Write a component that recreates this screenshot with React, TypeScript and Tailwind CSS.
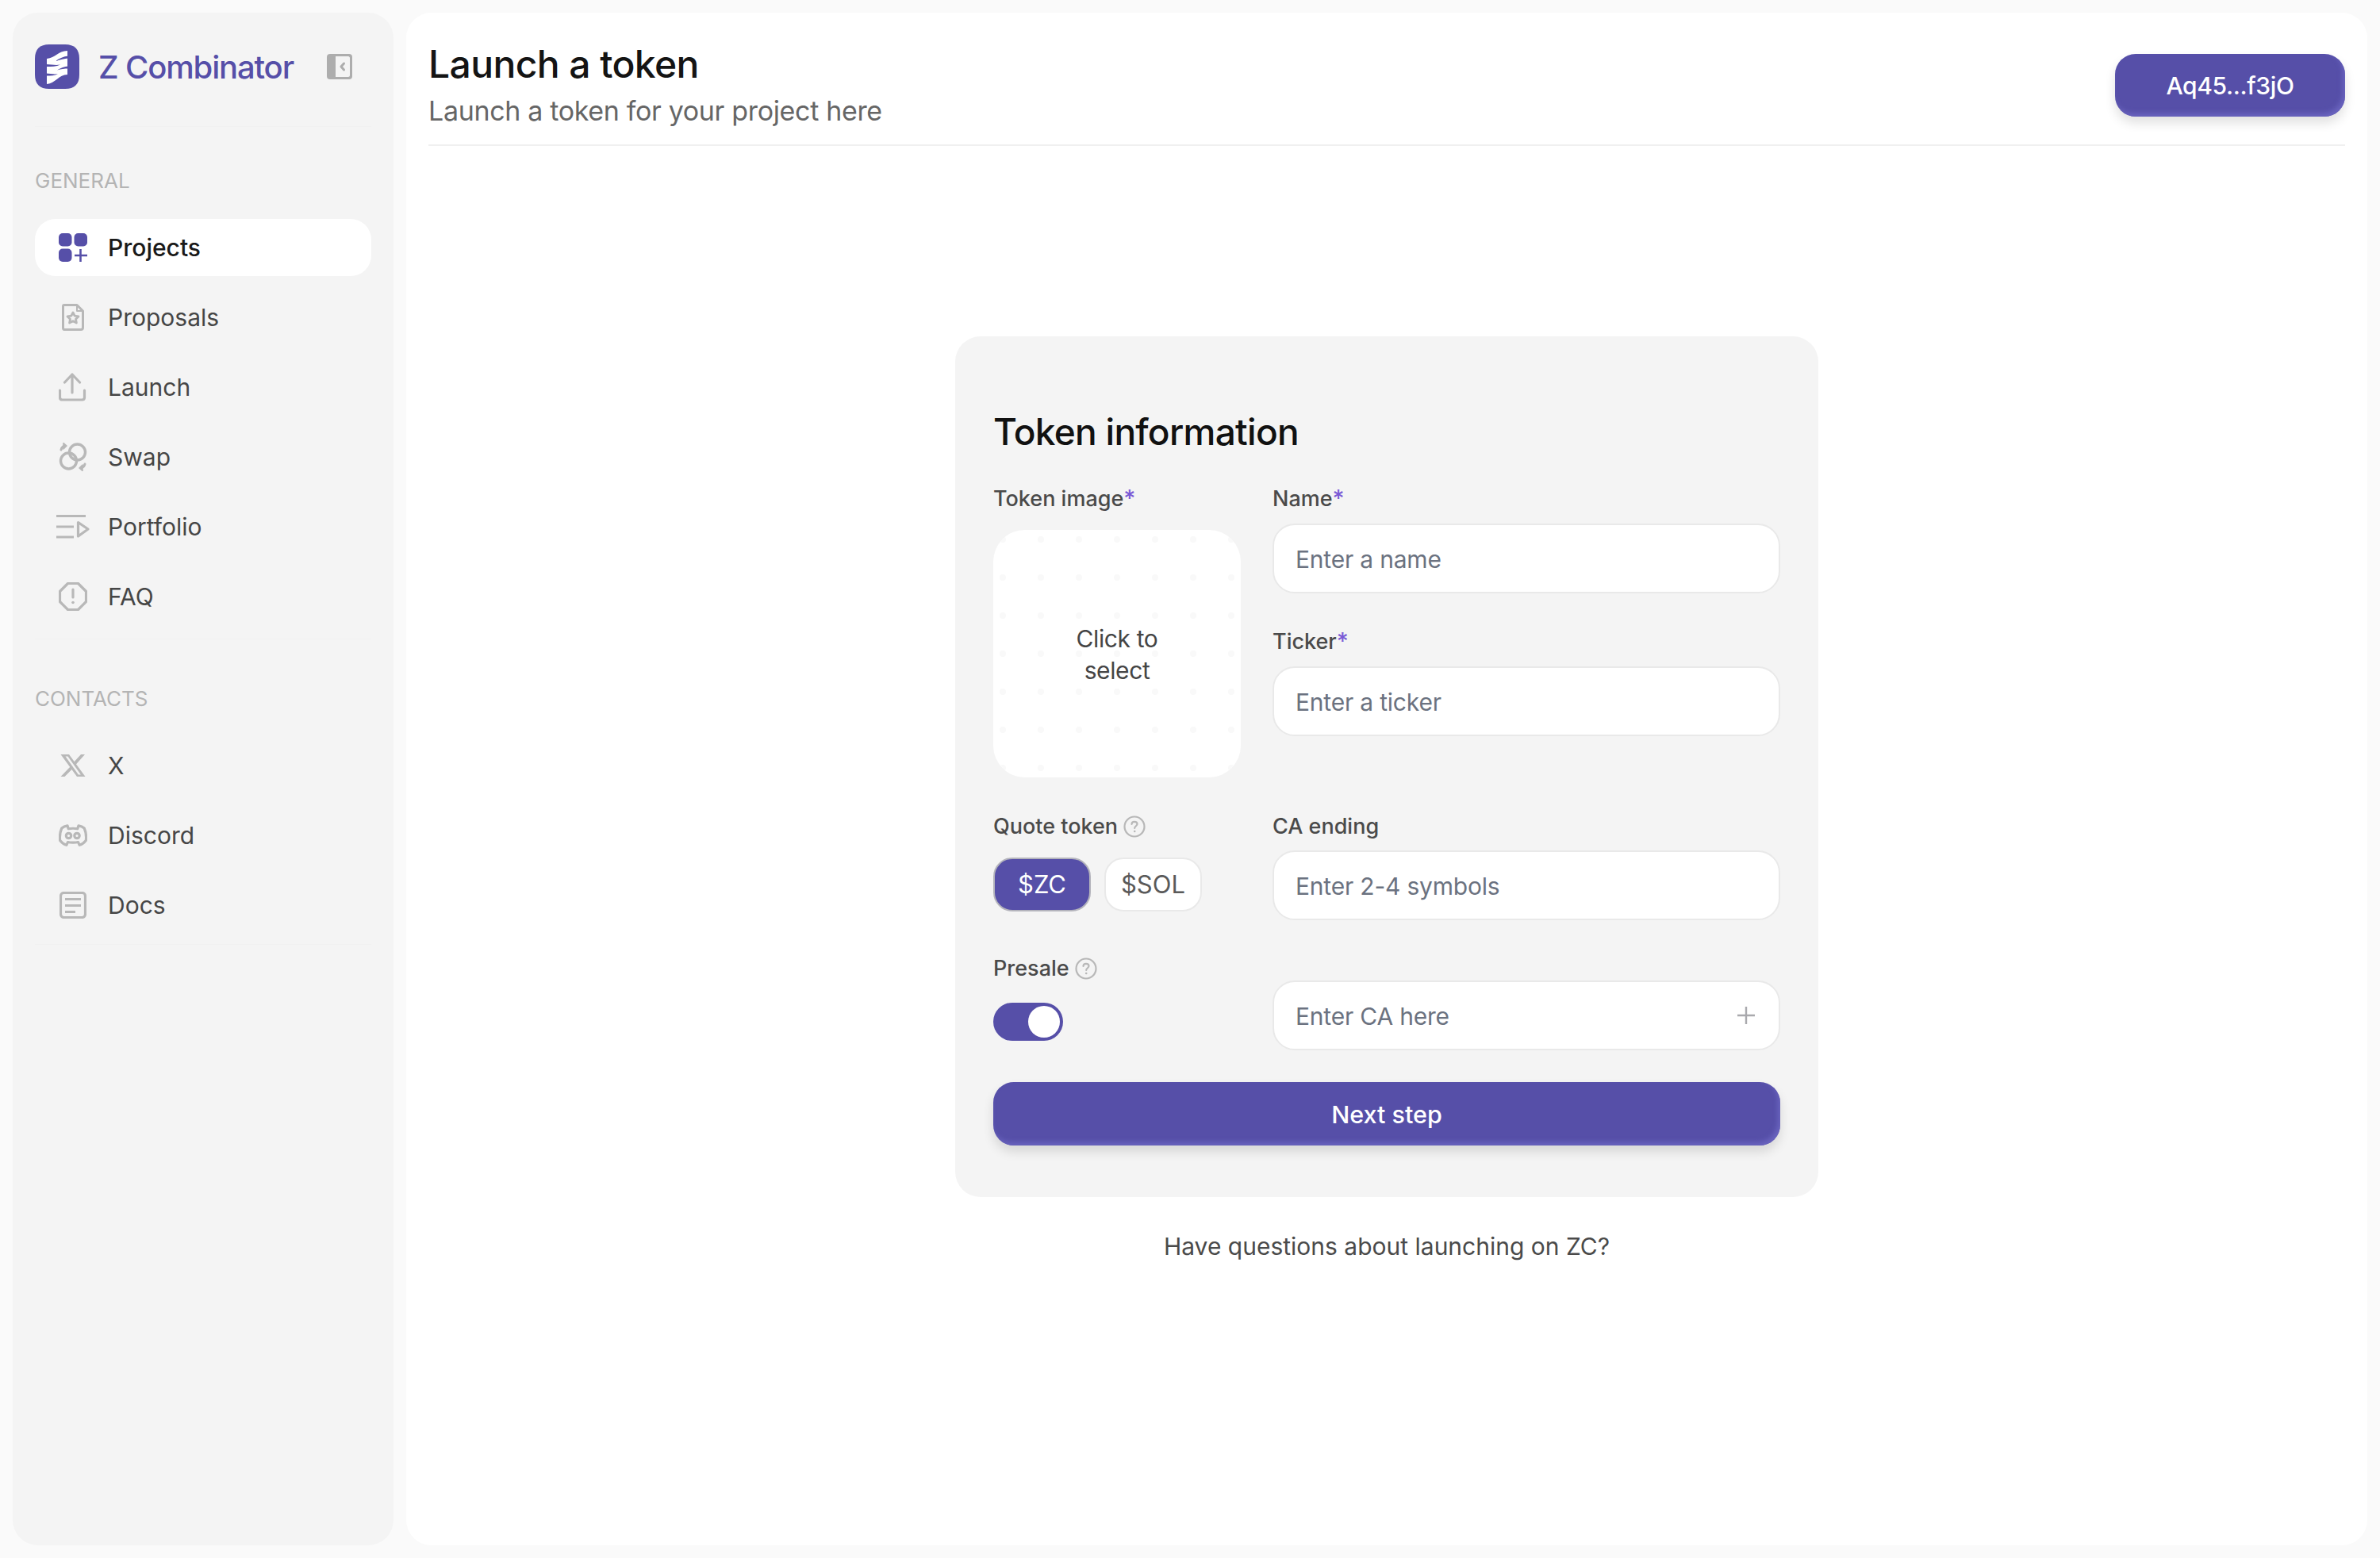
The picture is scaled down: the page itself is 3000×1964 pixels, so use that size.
import React from "react";

const P = "#564fa8";
const G = "#b8b8b8";

function LogoMark() {
  return (
    <svg width="56" height="56" viewBox="0 0 56 56">
      <path d="M18 0H38C50 0 56 6 56 18V38C56 50 50 56 38 56H18C6 56 0 50 0 38V18C0 6 6 0 18 0Z" fill={P} />
      <path d="M15 18C26 17 29 8 41 8V38C30 38 26 49 15 50Z" fill="#fff" />
      <path d="M42 14.5C36 15 31 17.5 26 21C32 19 37 18 42 17.5Z" fill={P} />
      <path d="M42 27.5C37 28 33 29.5 28 32.5C33 31 37 30.5 42 30.5Z" fill={P} />
      <path d="M14 25C21 25.5 27 26.5 32 25.5C27 28 21 28 14 28Z" fill={P} />
      <path d="M14 36.5C20 37 25 38 29 37C25 39.5 20 39.5 14 39.5Z" fill={P} />
    </svg>
  );
}

function CollapseIcon() {
  return (
    <svg width="32" height="32" viewBox="0 0 32 32">
      <rect x="0" y="0" width="32" height="32" rx="4" fill="#adadad" />
      <path d="M11 3H27C28 3 29 4 29 5V27C29 28 28 29 27 29H11Z" fill="#f4f4f4" />
      <path d="M21.5 12L18 16L21.5 20" fill="none" stroke="#adadad" strokeWidth="3" strokeLinecap="round" strokeLinejoin="round" />
    </svg>
  );
}

function ProjectsIcon() {
  return (
    <svg width="36" height="36" viewBox="0 0 36 36" fill={P}>
      <rect x="0" y="0" width="16.5" height="16.5" rx="5" />
      <rect x="19.5" y="0" width="16.5" height="16.5" rx="5" />
      <rect x="0" y="19.5" width="16.5" height="16.5" rx="5" />
      <path d="M27.5 20V36M20 28H36" stroke={P} strokeWidth="2.6" fill="none" />
    </svg>
  );
}

function ProposalsIcon() {
  return (
    <svg width="28" height="34" viewBox="0 0 28 34" fill="none" stroke={G} strokeWidth="3" strokeLinejoin="round" strokeLinecap="round">
      <path d="M3 1.5H19L26.5 9V30C26.5 31.5 25.5 32.5 24 32.5H3C2 32.5 1.5 31.5 1.5 30V3C1.5 2 2 1.5 3 1.5Z" />
      <path d="M19 2V9H26" strokeWidth="2" />
      <path d="M14 11L16.2 15.2L21 15.9L17.5 19.2L18.4 24L14 21.7L9.6 24L10.5 19.2L7 15.9L11.8 15.2Z" strokeWidth="2.8" />
    </svg>
  );
}

function LaunchIcon() {
  return (
    <svg width="36" height="36" viewBox="0 0 36 36" fill="none" stroke={G} strokeWidth="3.2" strokeLinecap="round" strokeLinejoin="round">
      <path d="M17 3V25M7.5 12L17 2L26.5 12" />
      <path d="M1.5 22V31C1.5 33 2.5 34 4.5 34H29.5C31.5 34 32.5 33 32.5 31V22" />
    </svg>
  );
}

function SwapIcon() {
  return (
    <svg width="36" height="36" viewBox="0 0 36 36" fill="none" stroke={G} strokeWidth="3.4" strokeLinecap="round" strokeLinejoin="round">
      <circle cx="23.5" cy="12" r="10" />
      <circle cx="12.5" cy="23" r="10" />
      <path d="M3 9C3.5 6.5 5 5 7.5 4" strokeWidth="3" />
      <path d="M6 0.5L10 4L6 8Z" fill={G} strokeWidth="1.5" />
      <path d="M33 27C32.5 29.5 31 31 28.5 32" strokeWidth="3" />
      <path d="M30 35.5L26 32L30 28Z" fill={G} strokeWidth="1.5" />
    </svg>
  );
}

function PortfolioIcon() {
  return (
    <svg width="44" height="30" viewBox="0 0 44 30" fill="none" stroke={G} strokeWidth="3.2" strokeLinejoin="round">
      <path d="M1 1.5H38M1 15H23M1 28H23" />
      <path d="M28.5 9.5L41 18L28.5 27Z" />
    </svg>
  );
}

function FaqIcon() {
  return (
    <svg width="36" height="36" viewBox="0 0 36 36" fill="none" stroke={G} strokeWidth="3.2" strokeLinejoin="round" strokeLinecap="round">
      <path d="M11.5 1.5H24.5L34.5 11.5V24.5L24.5 34.5H11.5L1.5 24.5V11.5Z" />
      <path d="M18 9V19" />
      <circle cx="18" cy="25.5" r="1.8" fill={G} stroke="none" />
    </svg>
  );
}

function XIcon() {
  return (
    <svg width="32" height="28" viewBox="0 0 32 28">
      <path d="M0.5 0H11L31.5 28H21Z" fill={G} />
      <path d="M6.5 2.5L9.5 2.5L25.8 25.5L22.8 25.5Z" fill="#f4f4f4" />
      <path d="M26 0H31L19 13.5L16.4 10.5ZM13 15L15.5 18L5.5 28H0.5Z" fill={G} />
    </svg>
  );
}

function DiscordIcon() {
  return (
    <svg width="36" height="28" viewBox="0 0 36 28" fill="none" stroke={G} strokeWidth="3.2" strokeLinejoin="round" strokeLinecap="round">
      <path d="M11 1.8C8 2.3 5.5 3.5 3.8 5C1.6 10 1 15 1.7 20.5C4 23.5 7 25.5 9.8 26.3L11.5 22.5C14.5 23.3 21.5 23.3 24.5 22.5L26.2 26.3C29 25.5 32 23.5 34.3 20.5C35 15 34.4 10 32.2 5C30.5 3.5 28 2.3 25 1.8L23.8 5.8C20.5 5.2 15.5 5.2 12.2 5.8Z" />
      <circle cx="12.5" cy="14.5" r="3.2" />
      <circle cx="23" cy="14.5" r="3.2" />
    </svg>
  );
}

function DocsIcon() {
  return (
    <svg width="34" height="34" viewBox="0 0 34 34" fill="none" stroke={G} strokeWidth="3.2" strokeLinejoin="round">
      <rect x="1.5" y="1.5" width="31" height="31" rx="4" />
      <path d="M7 9.5H27M7 17.5H27M7 25.5H20" />
    </svg>
  );
}

function HelpIcon() {
  return (
    <svg width="28" height="28" viewBox="0 0 28 28" fill="none" stroke="#b8b8b8" strokeWidth="2.2" strokeLinecap="round">
      <circle cx="14" cy="14" r="12.5" />
      <path d="M10.5 11C10.5 9 12 7.8 14 7.8C16 7.8 17.5 9 17.5 10.8C17.5 13 14.2 13.5 14.2 16" />
      <circle cx="14.2" cy="20" r="1.3" fill="#b8b8b8" stroke="none" />
    </svg>
  );
}

function NavRow({ icon, label, active }: { icon: React.ReactNode; label: string; active?: boolean }) {
  return (
    <div
      className={
        active
          ? "flex h-[72px] items-center gap-[22px] rounded-[26px] bg-white pl-[26px] text-[30px] font-medium text-[#1a1a1a]"
          : "flex h-[72px] items-center gap-[22px] rounded-[26px] pl-[26px] text-[30px] text-[#464646]"
      }
    >
      <span className="flex w-[44px] items-center justify-center">{icon}</span>
      <span className="mt-[1px]">{label}</span>
    </div>
  );
}

function Label({ text, star, help }: { text: string; star?: boolean; help?: boolean }) {
  return (
    <div className="flex h-[36px] items-center gap-[7px] pt-[1px] text-[27px] font-medium leading-[36px] text-[#4a4a4a]">
      <span>
        {text}
        {star && <span className="text-[29px] text-[#7a5ad6]">*</span>}
      </span>
      {help && <HelpIcon />}
    </div>
  );
}

function Field({ placeholder, plus, className }: { placeholder: string; plus?: boolean; className: string }) {
  return (
    <div className={"flex h-[88px] items-center rounded-[28px] border-2 border-[#e9e9e9] bg-white pl-[27px] pr-[30px] " + className}>
      <input
        placeholder={placeholder}
        className="mt-[3px] min-w-0 flex-1 bg-transparent text-[30px] tracking-[-0.2px] text-[#6b7280] outline-none placeholder:text-[#6b7280]"
      />
      {plus && (
        <svg width="22" height="22" viewBox="0 0 22 22" stroke="#a9a9ad" strokeWidth="2.4">
          <path d="M11 0V22M0 11H22" />
        </svg>
      )}
    </div>
  );
}

const dotsX = [12, 60, 108, 156, 204, 252, 300];
const dotsY = [12, 60, 108, 156, 204, 252, 300];

export default function App() {
  return (
    <div className="flex h-[1964px] w-[3000px] gap-4 overflow-hidden bg-[#fafafa] p-4 font-['Inter',sans-serif]">
      <aside className="flex w-[480px] shrink-0 flex-col rounded-[32px] bg-[#f4f4f4] px-[28px] pt-[40px]">
        <div className="flex h-[56px] items-center justify-between pr-[24px]">
          <div className="flex items-center gap-[24px]">
            <LogoMark />
            <span className="mt-[1px] text-[40px] font-medium tracking-[-1.15px] text-[#564fa8]">Z Combinator</span>
          </div>
          <CollapseIcon />
        </div>
        <div className="mt-[47px] h-[1px] bg-[#f1f1f1]" />
        <div className="mt-[52px] h-[32px] text-[26px] leading-[32px] text-[#b4b4b4]">GENERAL</div>
        <nav className="mt-[32px] flex flex-col gap-4">
          <NavRow active icon={<ProjectsIcon />} label="Projects" />
          <NavRow icon={<ProposalsIcon />} label="Proposals" />
          <NavRow icon={<LaunchIcon />} label="Launch" />
          <NavRow icon={<SwapIcon />} label="Swap" />
          <NavRow icon={<PortfolioIcon />} label="Portfolio" />
          <NavRow icon={<FaqIcon />} label="FAQ" />
        </nav>
        <div className="mt-[17px] h-[1px] bg-[#f1f1f1]" />
        <div className="mt-[59px] h-[32px] text-[26px] leading-[32px] text-[#b4b4b4]">CONTACTS</div>
        <nav className="mt-[32px] flex flex-col gap-4">
          <NavRow icon={<XIcon />} label="X" />
          <NavRow icon={<DiscordIcon />} label="Discord" />
          <NavRow icon={<DocsIcon />} label="Docs" />
        </nav>
        <div className="mt-[13px] h-[1px] bg-[#f1f1f1]" />
      </aside>

      <main className="flex min-w-0 flex-1 flex-col rounded-[32px] bg-white px-[28px] pt-[37px]">
        <header className="flex items-center justify-between border-b-2 border-[#f0f0f0] pb-[20px]">
          <div>
            <h1 className="text-[48px] font-medium leading-[56px] tracking-[-0.6px] text-[#141414]">Launch a token</h1>
            <p className="mt-[9px] text-[34px] leading-[44px] tracking-[-0.34px] text-[#666666]">Launch a token for your project here</p>
          </div>
          <button className="flex h-[79px] w-[290px] items-center justify-center rounded-[26px] bg-[#564fa8] pt-[1px] text-[30px] font-medium tracking-[-0.35px] text-white shadow-[inset_-3px_-4px_6px_#6a64bf,0_8px_14px_rgba(0,0,0,0.12)]">
            Aq45...f3jO
          </button>
        </header>

        <div className="mt-[240px] flex flex-col items-center">
          <section className="w-[1088px] rounded-[32px] bg-[#f4f4f4] px-[48px] pb-[65px] pt-[92px]">
            <h2 className="text-[46px] font-medium leading-[56px] tracking-[-0.72px] text-[#111111]">Token information</h2>

            <div className="mt-[38px] grid grid-cols-[312px_640px] gap-x-[40px]">
              <div>
                <Label text="Token image" star />
                <div className="relative mt-[22px] flex h-[312px] w-[312px] items-center justify-center overflow-hidden rounded-[40px] bg-white">
                  {dotsY.map((y) =>
                    dotsX.map((x) => (
                      <span
                        key={x + "-" + y}
                        className="absolute h-[8px] w-[8px] rounded-full bg-[#f9f9f9]"
                        style={{ left: x - 4, top: y - 4 }}
                      />
                    ))
                  )}
                  <span className="relative mt-[1px] w-[200px] text-center text-[30px] font-normal leading-[40px] tracking-[-0.4px] text-[#454545]">
                    Click to
                    <br />
                    select
                  </span>
                </div>
              </div>
              <div>
                <Label text="Name" star />
                <Field className="mt-[14px]" placeholder="Enter a name" />
                <div className="mt-[42px]">
                  <Label text="Ticker" star />
                </div>
                <Field className="mt-[14px]" placeholder="Enter a ticker" />
              </div>
            </div>

            <div className="mt-[43px] grid grid-cols-[312px_640px] gap-x-[40px]">
              <div>
                <Label text="Quote token" help />
                <div className="mt-[22px] flex gap-[17px]">
                  <button className="flex h-[68px] w-[123px] items-center justify-center rounded-[24px] border-2 border-[#b4b4bc] bg-[#564fa8] pt-[1px] text-[31px] text-white">
                    $ZC
                  </button>
                  <button className="flex h-[68px] w-[123px] items-center justify-center rounded-[24px] border-2 border-[#e9e9e9] bg-white pt-[1px] text-[31px] text-[#5a5a5a]">
                    $SOL
                  </button>
                </div>
              </div>
              <div>
                <Label text="CA ending" />
                <Field className="mt-[13px]" placeholder="Enter 2-4 symbols" />
              </div>
            </div>

            <div className="mt-[42px] grid grid-cols-[312px_640px] gap-x-[40px]">
              <div>
                <Label text="Presale" help />
                <div className="mt-[26px] flex h-[48px] w-[88px] items-center justify-end rounded-full bg-[#564fa8] pr-[4px]">
                  <span className="h-[40px] w-[40px] rounded-full bg-white" />
                </div>
              </div>
              <div className="pt-[34px]">
                <Field className="" placeholder="Enter CA here" plus />
              </div>
            </div>

            <button className="mt-[40px] flex h-[80px] w-[992px] items-center justify-center rounded-[26px] bg-[#564fa8] pt-[1px] text-[30.5px] font-medium text-white shadow-[inset_-3px_-4px_6px_#6a64bf,0_8px_14px_rgba(0,0,0,0.12)]">
              Next step
            </button>
          </section>
          <p className="mt-[40px] text-[30px] leading-[44px] text-[#4a4a4a]">Have questions about launching on ZC?</p>
        </div>
      </main>
    </div>
  );
}
